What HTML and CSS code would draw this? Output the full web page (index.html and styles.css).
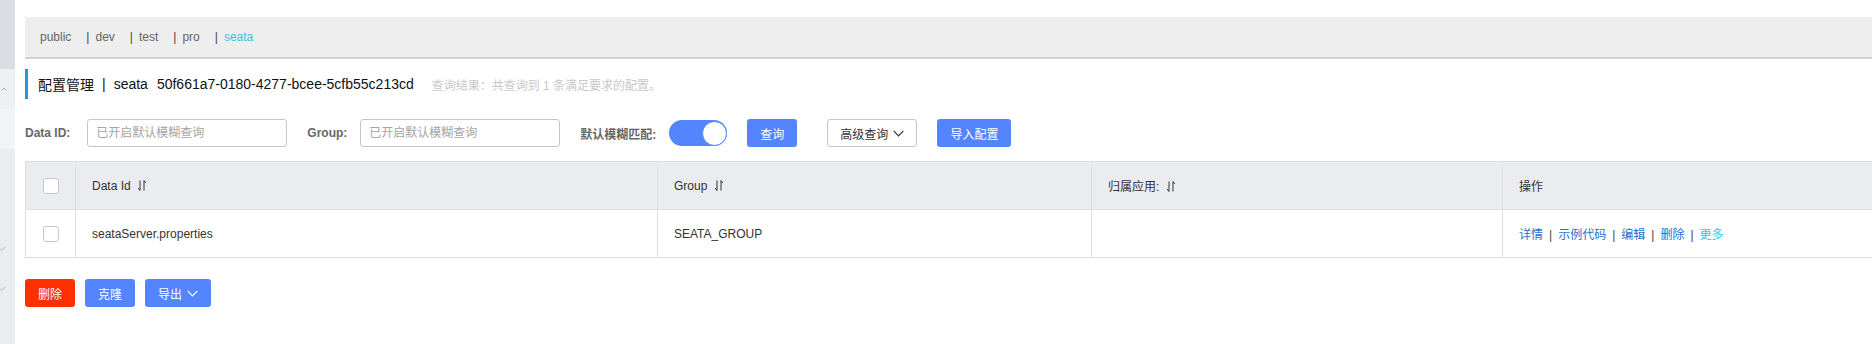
FILE: index.html
```html
<!DOCTYPE html>
<html lang="zh-CN">

<head>
    <meta charset="UTF-8">
    <meta name="viewport" content="width=device-width, initial-scale=1.0">
    <title>配置管理</title>
    <link rel="stylesheet" href="styles.css">
</head>

<body>
    <div class="sidebar">
        <div class="side-top"></div>
        <div class="side-item side-open">
            <svg width="6" height="4" viewBox="0 0 6 4"><polyline points="0.5,3.5 3,1 5.5,3.5" fill="none" stroke="#999" stroke-width="0.8"/></svg>
        </div>
        <div class="side-item side-light"></div>
        <div class="side-rest">
            <svg class="side-check" width="6" height="5" viewBox="0 0 6 5"><polyline points="0,2.5 2,4.3 5.5,0.8" fill="none" stroke="#aaa" stroke-width="0.8"/></svg>
            <svg class="side-check" width="6" height="5" viewBox="0 0 6 5"><polyline points="0,2.5 2,4.3 5.5,0.8" fill="none" stroke="#aaa" stroke-width="0.8"/></svg>
        </div>
    </div>

    <div class="main">
        <div class="env-bar">
            <span class="env">public</span>
            <span class="env"><i class="env-sep">|</i>dev</span>
            <span class="env"><i class="env-sep">|</i>test</span>
            <span class="env"><i class="env-sep">|</i>pro</span>
            <span class="env env-active"><i class="env-sep">|</i>seata</span>
        </div>

        <div class="title">
            <span>配置管理</span>
            <span class="title-sep">|</span>
            <span>seata</span>
            <span class="ns-id">50f661a7-0180-4277-bcee-5cfb55c213cd</span>
            <span class="query-tip">查询结果：共查询到 1 条满足要求的配置。</span>
        </div>

        <div class="search">
            <label class="label label-id">Data ID:</label>
            <input class="input" type="text" placeholder="已开启默认模糊查询">
            <label class="label">Group:</label>
            <input class="input" type="text" placeholder="已开启默认模糊查询">
            <label class="label">默认模糊匹配:</label>
            <div class="switch"><span class="knob"></span></div>
            <button class="btn btn-blue">查询</button>
            <button class="btn btn-line btn-adv">高级查询
                <svg width="11" height="7" viewBox="0 0 11 7"><polyline points="0.7,0.8 5.5,5.8 10.3,0.8" fill="none" stroke="currentColor" stroke-width="1.2"/></svg>
            </button>
            <button class="btn btn-blue">导入配置</button>
        </div>

        <table class="list">
            <colgroup>
                <col style="width: 50px">
                <col style="width: 582px">
                <col style="width: 434px">
                <col style="width: 411px">
                <col>
            </colgroup>
            <thead>
                <tr>
                    <th class="check-cell"><span class="checkbox"></span></th>
                    <th>Data Id <svg class="sort" width="8" height="11" viewBox="0 0 8 11"><path d="M2 0.5V10.5M2 10.5L0 8M6 10.5V0.5M6 0.5L8 3" fill="none" stroke="#333" stroke-width="1"/></svg></th>
                    <th>Group <svg class="sort" width="8" height="11" viewBox="0 0 8 11"><path d="M2 0.5V10.5M2 10.5L0 8M6 10.5V0.5M6 0.5L8 3" fill="none" stroke="#333" stroke-width="1"/></svg></th>
                    <th>归属应用: <svg class="sort" width="8" height="11" viewBox="0 0 8 11"><path d="M2 0.5V10.5M2 10.5L0 8M6 10.5V0.5M6 0.5L8 3" fill="none" stroke="#333" stroke-width="1"/></svg></th>
                    <th>操作</th>
                </tr>
            </thead>
            <tbody>
                <tr>
                    <td class="check-cell"><span class="checkbox"></span></td>
                    <td>seataServer.properties</td>
                    <td>SEATA_GROUP</td>
                    <td></td>
                    <td class="ops">
                        <a>详情</a><span class="op-sep">|</span><a>示例代码</a><span class="op-sep">|</span><a>编辑</a><span class="op-sep">|</span><a>删除</a><span class="op-sep">|</span><a class="more">更多</a>
                    </td>
                </tr>
            </tbody>
        </table>

        <div class="actions">
            <button class="btn btn-red">删除</button>
            <button class="btn btn-blue">克隆</button>
            <button class="btn btn-blue btn-adv">导出
                <svg width="11" height="7" viewBox="0 0 11 7"><polyline points="0.7,0.8 5.5,5.8 10.3,0.8" fill="none" stroke="currentColor" stroke-width="1.2"/></svg>
            </button>
        </div>
    </div>
</body>

</html>
```

FILE: styles.css
```css
* {
    margin: 0;
    padding: 0;
    box-sizing: border-box;
}

body {
    display: flex;
    width: 1872px;
    height: 344px;
    overflow: hidden;
    background-color: #fff;
    font-family: "Liberation Sans", "Noto Sans CJK SC", sans-serif;
    font-size: 12px;
    color: #333;
}

/* left menu, mostly cut off */
.sidebar {
    flex: none;
    width: 15px;
    display: flex;
    flex-direction: column;
    background-color: #e9ecf0;
}

.side-top {
    height: 69px;
    background-color: #dadde3;
}

.side-item {
    height: 40px;
    display: flex;
    align-items: center;
    padding-left: 1px;
}

.side-open {
    background-color: #eef0f3;
}

.side-light {
    background-color: #f3f4f6;
}

.side-rest {
    flex: 1;
    display: flex;
    flex-direction: column;
    gap: 35px;
    padding-top: 97px;
}

.main {
    flex: none;
    width: 1860px;
    margin-left: 10px;
}

/* namespace bar */
.env-bar {
    display: flex;
    align-items: center;
    height: 42px;
    margin-top: 17px;
    padding-left: 15px;
    background-color: #eeeeee;
    border-bottom: 2px solid #d4d4d4;
    color: #666;
}

.env {
    margin-right: 15px;
}

.env-sep {
    font-style: normal;
    margin-right: 6px;
    color: #444;
}

.env-active {
    color: #33c5e0;
}

/* title */
.title {
    display: flex;
    align-items: center;
    height: 30px;
    margin-top: 10px;
    padding-left: 10px;
    border-left: 3px solid #1a9ad6;
    font-size: 14px;
    color: #111;
}

.title-sep {
    margin: 0 8px;
}

.ns-id {
    margin-left: 9px;
}

.query-tip {
    margin-left: 18px;
    font-size: 12px;
    color: #c8c8c8;
}

/* search form */
.search {
    display: flex;
    align-items: center;
    height: 28px;
    margin-top: 20px;
}

.label {
    margin-right: 13px;
    font-weight: bold;
    color: #666;
}

.label-id {
    margin-right: 17px;
}

.input {
    width: 200px;
    height: 28px;
    margin-right: 20px;
    padding: 0 8px;
    border: 1px solid #c4c6cf;
    border-radius: 3px;
    font-family: inherit;
    font-size: 12px;
    outline: none;
}

.input::placeholder {
    color: #a5a5a5;
}

.switch {
    display: flex;
    justify-content: flex-end;
    align-items: center;
    width: 58px;
    height: 26px;
    margin-right: 20px;
    border-radius: 13px;
    background-color: #5584ff;
}

.knob {
    width: 25px;
    height: 25px;
    border: 1px solid #5584ff;
    border-radius: 50%;
    background-color: #fff;
}

.btn {
    display: inline-flex;
    align-items: center;
    height: 28px;
    padding: 0 13px;
    border: none;
    border-radius: 3px;
    font-family: inherit;
    font-size: 12px;
    color: #fff;
}

.btn-blue {
    background-color: #5584ff;
}

.btn-red {
    background-color: #ff3000;
}

.btn-line {
    padding: 0 12px;
    border: 1px solid #c4c6cf;
    background-color: #fff;
    color: #333;
}

.btn-adv {
    gap: 5px;
}

.search .btn-blue:first-of-type {
    margin-right: 30px;
}

.search .btn-line {
    margin-right: 20px;
}

/* table */
.list {
    width: 1860px;
    margin-top: 14px;
    border-collapse: collapse;
    table-layout: fixed;
    border: 1px solid #dcdee3;
}

.list th,
.list td {
    height: 48px;
    padding: 0 16px;
    border: 1px solid #dcdee3;
    text-align: left;
    font-weight: normal;
    color: #333;
    white-space: nowrap;
}

.list th {
    background-color: #ebecf0;
}

.list .check-cell {
    padding: 0;
    text-align: center;
}

.checkbox {
    display: inline-block;
    width: 16px;
    height: 16px;
    vertical-align: middle;
    border: 1px solid #c4c6cf;
    border-radius: 3px;
    background-color: #fff;
}

.sort {
    margin-left: 4px;
    vertical-align: -1px;
}

.ops a {
    color: #1f6fcf;
}

.ops .more {
    color: #33c5e0;
}

.op-sep {
    margin: 0 6px;
    color: #444;
}

/* batch buttons */
.actions {
    display: flex;
    gap: 10px;
    margin-top: 21px;
}
```
